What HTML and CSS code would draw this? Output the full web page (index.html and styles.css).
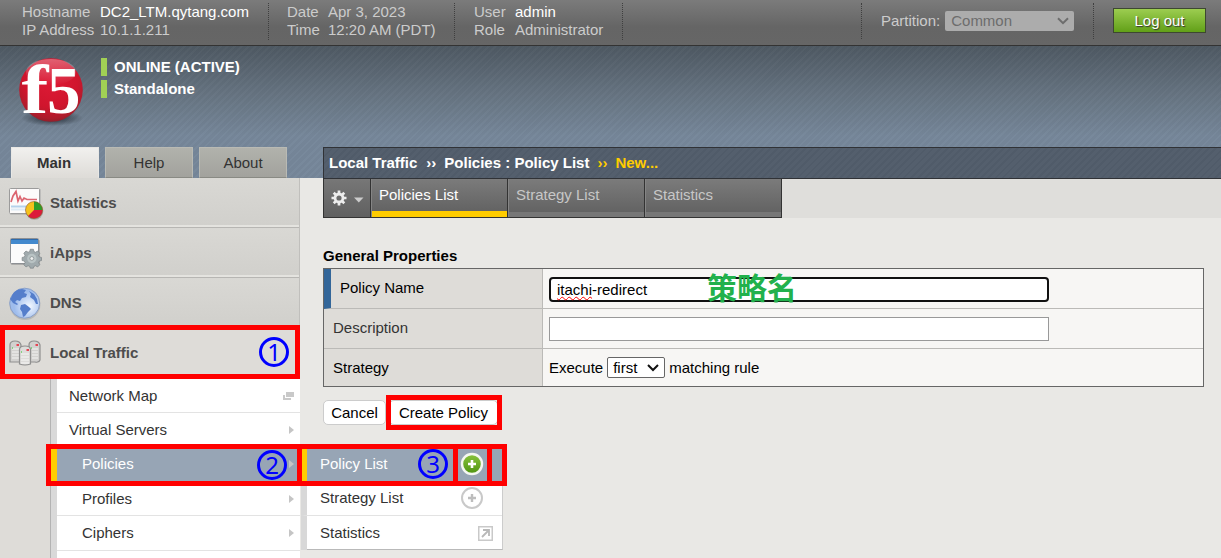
FILE: index.html
```html
<!DOCTYPE html>
<html lang="en">
<head>
<meta charset="utf-8">
<title>BIG-IP - Policies</title>
<link rel="stylesheet" href="styles.css">
</head>
<body>
<div class="app">
  <header class="topbar">
    <dl class="info info-host">
      <dt>Hostname</dt><dd class="strong">DC2_LTM.qytang.com</dd>
      <dt>IP Address</dt><dd>10.1.1.211</dd>
    </dl>
    <dl class="info info-date">
      <dt>Date</dt><dd>Apr 3, 2023</dd>
      <dt>Time</dt><dd>12:20 AM (PDT)</dd>
    </dl>
    <dl class="info info-user">
      <dt>User</dt><dd class="strong">admin</dd>
      <dt>Role</dt><dd>Administrator</dd>
    </dl>
    <div class="partition">
      <span>Partition:</span>
      <span class="partition-select">Common
        <svg width="12" height="8" viewBox="0 0 12 8"><path d="M1 1.200 6 6.200 11 1.200" fill="none" stroke="#6d6d6d" stroke-width="2"/></svg>
      </span>
    </div>
    <div class="logout-wrap"><button class="logout">Log out</button></div>
  </header>

  <div class="body">
    <aside class="side">
      <div class="brand">
        <svg class="logo" width="70" height="72" viewBox="0 0 70 72">
          <defs>
            <radialGradient id="ball" cx=".5" cy=".35" r=".7">
              <stop offset="0" stop-color="#de1a36"/><stop offset=".6" stop-color="#d0152d"/><stop offset=".85" stop-color="#ad1c2b"/><stop offset="1" stop-color="#7c2029"/>
            </radialGradient>
            <linearGradient id="shine" x1="0" y1="0" x2="0" y2="1">
              <stop offset="0" stop-color="#fff" stop-opacity=".32"/><stop offset="1" stop-color="#fff" stop-opacity="0"/>
            </linearGradient>
            <radialGradient id="shade"><stop offset="0" stop-color="#1d252d" stop-opacity=".95"/><stop offset="1" stop-color="#1d252d" stop-opacity="0"/></radialGradient>
          </defs>
          <ellipse cx="36" cy="60" rx="31" ry="8" fill="url(#shade)"/>
          <circle cx="35" cy="32" r="31.800" fill="url(#ball)"/>
          <ellipse cx="35" cy="14" rx="25" ry="13" fill="url(#shine)"/>
          <text class="logo-f" transform="translate(5.500 54.500) scale(1.170 1)">f</text>
          <text class="logo-5" transform="translate(31 54.500)">5</text>
        </svg>
        <div class="status">
          <div class="status-line">ONLINE (ACTIVE)</div>
          <div class="status-line">Standalone</div>
        </div>
      </div>
      <nav class="tabs">
        <div class="tab tab-on">Main</div><div class="tab">Help</div><div class="tab">About</div>
      </nav>
      <div class="menu">
        <div class="item">
          <svg width="38" height="34" viewBox="0 0 38 34">
            <rect x="2" y="3" width="31" height="26" rx="1" fill="#aaa" opacity=".55"/>
            <rect x="1.500" y="2.500" width="30" height="25" rx="1" fill="#fcfbfb" stroke="#9b9b9b"/>
            <path d="M3 16 5 10 8 5.500 10 15 12 10.500 14 15 16 12 19 13.500H29" fill="none" stroke="#dc6570" stroke-width="1.700"/>
            <path d="M3 20.500h26" stroke="#b5d2eb" stroke-width="2"/><path d="M3 23.500h26" stroke="#deebf5" stroke-width="2"/>
            <circle cx="26.500" cy="25" r="8.800" fill="#777" opacity=".5"/>
            <circle cx="26" cy="24" r="8.500" fill="#f5c21c"/>
            <path d="M26 24V15.500a8.500 8.500 0 0 1 8.500 8.500z" fill="#2e9d28"/>
            <path d="M26 24h8.500a8.500 8.500 0 0 1-14.500 6z" fill="#dc1a3a"/>
            <circle cx="26" cy="24" r="8.500" fill="none" stroke="#86512d" stroke-opacity=".55"/>
          </svg>
          <span>Statistics</span>
        </div>
        <div class="item">
          <svg width="38" height="34" viewBox="0 0 38 34">
            <rect x="3" y="4" width="29" height="25" rx="1" fill="#888" opacity=".5"/>
            <rect x="2.500" y="2.500" width="28" height="25" rx="1" fill="#fbfbfb" stroke="#8d9094"/>
            <path d="M3 3h27v5h-27z" fill="#4389cd"/><path d="M3 3.500h27" stroke="#2d6bad"/>
            <g transform="translate(2.700 2.700) scale(.88)" fill="#a0aaad" stroke="#7d8588" stroke-width=".8">
              <path d="m22.200 12 3.600 0 .6 2.600 1.800.8 2.400-1.400 2.500 2.500-1.400 2.300.8 1.900 2.500.6v3.500l-2.500.6-.8 1.900 1.400 2.300-2.500 2.500-2.400-1.400-1.800.8-.6 2h-3.600l-.6-2-1.800-.8-2.400 1.400-2.500-2.500 1.400-2.300-.8-1.900-2.500-.6v-3.500l2.500-.6.8-1.900-1.400-2.300 2.500-2.500 2.400 1.400 1.800-.8z"/>
              <circle cx="24" cy="22.500" r="5.300" fill="#b9c3c4" stroke="none"/>
              <circle cx="24" cy="22.500" r="2.200" fill="#eef0ef"/>
            </g>
          </svg>
          <span>iApps</span>
        </div>
        <div class="item">
          <svg width="38" height="34" viewBox="0 0 38 34">
            <defs><radialGradient id="globe" cx=".65" cy=".6"><stop offset="0" stop-color="#f3f8ff"/><stop offset="1" stop-color="#9ebcec"/></radialGradient></defs>
            <circle cx="17" cy="18.500" r="15.400" fill="#999" opacity=".45"/>
            <circle cx="16.700" cy="17.200" r="15" fill="url(#globe)" stroke="#8aa0c8"/>
            <path d="M3.500 11C5 6 9 3 14 3l4 1-2 3 3 1-1 3-4 1-2 3-3-1-2 2 3 2-1 1-4-2-3-4zM13 19l4-1 4 3 2 2-3 3-3 4-2 1-1-5-2-3zM21 5l5 3 3 5 1 5-2 0-2-4-4-3 1-3z" fill="#557ecb"/>
          </svg>
          <span>DNS</span>
        </div>
        <div class="item item-open">
          <svg width="38" height="34" viewBox="0 0 38 34">
            <path d="M2 26V9q0-4 5-4t6 4v17z" fill="#d2d1cf" stroke="#8f8f8f" stroke-width="1.200"/>
            <path d="M21 26V9q0-4 5-4t6 4v15q-1 3-5 2z" fill="#d2d1cf" stroke="#8f8f8f" stroke-width="1.200"/>
            <path d="M4 13h7M4 16h7M4 19h7M4 22h7M24 13h6M24 16h6M24 19h6M24 22h6" stroke="#f4f4f3"/>
            <path d="M11.500 28V13.500q0-3.500 5.500-3.500t5.500 3.500V28q-5.500 2-11 0z" fill="#dddcda" stroke="#8f8f8f" stroke-width="1.200"/>
            <path d="M13 18h8M13 21h8M13 24h8M13 27h8" stroke="#f7f7f6"/>
            <path d="M8.500 9h2.500M27.500 9h2.500M18.500 14h2.500" stroke="#e64452" stroke-width="2.200"/>
            <path d="M4 12h1M23 12h1M13 16h1" stroke="#68cf65" stroke-width="1.500"/>
          </svg>
          <span>Local Traffic</span>
        </div>
        <div class="submenu">
          <div class="row row-top">Network Map<svg width="11" height="8"><path d="M3 0h8v5H3zM0 3h2v3h6v2H0z" fill="#c9c9c9"/></svg></div>
          <div class="row row-short row-top">Virtual Servers<i class="arrow"></i></div>
          <div class="row row-on">Policies<i class="arrow"></i></div>
          <div class="row row-short">Profiles<i class="arrow"></i></div>
          <div class="row row-last">Ciphers<i class="arrow"></i></div>
          <div class="row"></div>
        </div>
      </div>
    </aside>

    <main class="content">
      <div class="crumb"><span>Local Traffic</span><span class="sep">››</span><span>Policies : Policy List</span><span class="sep gold">››</span><span class="gold">New...</span></div>
      <div class="strip">
        <div class="gear">
          <svg width="34" height="20" viewBox="0 0 34 20">
            <g stroke="#ededed" fill="none"><circle cx="8" cy="9" r="4" stroke-width="2.800"/><path d="M8 1.500v3M8 13.500v3M.5 9h3M12.500 9h3M2.700 3.700l2.200 2.200M11.100 12.100l2.200 2.200M13.300 3.700l-2.200 2.200M4.900 12.100l-2.200 2.200" stroke-width="2.700"/></g>
            <path d="M23 8.500h9.500L27.800 13.500z" fill="#ccc"/>
          </svg>
        </div>
        <div class="stab stab-on">Policies List</div>
        <div class="stab">Strategy List</div>
        <div class="stab">Statistics</div>
      </div>
      <div class="panel">
        <h2 class="title">General Properties</h2>
        <div class="props">
          <div class="label required">Policy Name</div>
          <div class="value"><div class="field field-focus"><span class="misspelt">itachi</span>-redirect</div></div>
          <div class="label dim">Description</div>
          <div class="value"><div class="field"></div></div>
          <div class="label last">Strategy</div>
          <div class="value last">Execute
            <span class="choice">first<svg width="12" height="8" viewBox="0 0 12 8"><path d="M1 1 6 6 11 1" fill="none" stroke="#111" stroke-width="2"/></svg></span>
            matching rule</div>
        </div>
        <div class="actions"><button class="btn btn-cancel">Cancel</button><button class="btn btn-create">Create Policy</button></div>
      </div>
    </main>
  </div>

  <div class="flyout">
    <div class="fly fly-on">Policy List
      <svg width="24" height="24" viewBox="0 0 24 24"><defs><linearGradient id="plus" x1="0" y1="0" x2="0" y2="1"><stop offset="0" stop-color="#8ac43e"/><stop offset="1" stop-color="#4e9310"/></linearGradient></defs><circle cx="12" cy="12" r="10" fill="url(#plus)" stroke="#f5f7f1" stroke-width="2.400"/><path d="M12 8v8M8 12h8" stroke="#fff" stroke-width="2.600"/></svg>
    </div>
    <div class="fly">Strategy List
      <svg width="24" height="24" viewBox="0 0 24 24"><circle cx="12" cy="12" r="10" fill="#fff" stroke="#c9c9c9" stroke-width="2"/><path d="M12 8v8M8 12h8" stroke="#bdbdbd" stroke-width="2.400"/></svg>
    </div>
    <div class="fly fly-last">Statistics
      <svg class="ext" width="15" height="15" viewBox="0 0 15 15"><rect x=".75" y=".75" width="13.500" height="13.500" fill="#fff" stroke="#c9c9c9" stroke-width="1.500"/><path d="M5 4h6v6M11 4 4 11" fill="none" stroke="#b9b9b9" stroke-width="1.800"/></svg>
    </div>
  </div>

  <div class="mark mark-traffic"></div>
  <div class="mark mark-policies"></div>
  <div class="mark mark-list"></div>
  <div class="mark mark-add"></div>
  <div class="mark mark-create"></div>
  <div class="step step-1">1</div>
  <div class="step step-2">2</div>
  <div class="step step-3">3</div>
  <div class="note">策略名</div>
</div>
</body>
</html>
```
FILE: styles.css
```css
* { box-sizing: border-box; }
body { margin: 0; font: 15px/18px "Liberation Sans", Arial, sans-serif; color: #000; }
.app { position: relative; width: 1221px; height: 558px; overflow: hidden; background: #e9e8e5; }
svg { display: block; flex: none; }
button { font: inherit; margin: 0; padding: 0; }

.topbar { display: flex; height: 46px; padding-top: 3px; border-bottom: 1px solid #333; background: linear-gradient(#7b7b7b, #656565 60%, #666); color: #ccc; }
.info { display: grid; grid-template-rows: 18px 18px; height: 37px; margin: 0; border-right: 1px dotted #3f3f3f; white-space: nowrap; }
.info dd { margin: 0; }
.info .strong { color: #fff; }
.info-host { width: 269px; padding-left: 22px; grid-template-columns: 78px 1fr; }
.info-date { width: 186px; padding-left: 18px; grid-template-columns: 41px 1fr; }
.info-user { width: 168px; padding-left: 19px; grid-template-columns: 41px 1fr; }
.partition { display: flex; gap: 5px; width: 233px; height: 36px; margin-left: 238px; padding: 8px 0 0 19px; border-left: 1px dotted #3f3f3f; border-right: 1px dotted #3f3f3f; }
.partition span:first-child { padding-top: 1px; }
.partition-select { display: flex; align-items: center; justify-content: space-between; width: 129px; height: 20px; padding: 0 5px 0 6px; border-radius: 2px; background: #acacac; color: #6d6d6d; }
.logout-wrap { padding: 5px 0 0 19px; }
.logout { display: block; width: 93px; height: 25px; border: 1px solid #3d4830; background: linear-gradient(#9ccd50, #62a018); color: #fff; text-shadow: 1px 1px 1px #333; }

.body { display: flex; height: 512px; background: repeating-linear-gradient(135deg, rgba(255,255,255,.015) 0 2px, rgba(0,0,0,.02) 2px 5px), linear-gradient(#4e5963, #65727f 45px, #76879a 90px, #76879a 132px) top / 100% 132px no-repeat; }
.side { width: 300px; }
.brand { display: flex; height: 101px; padding-top: 12px; }
.logo { margin-left: 16px; overflow: visible; }
.logo-f { font: bold 69px "Liberation Serif", serif; fill: #fff; }
.logo-5 { font: bold 67px "Liberation Serif", serif; fill: #fff; }
.status { margin-left: 15px; color: #fff; font-weight: bold; }
.status-line { height: 18px; margin-bottom: 4px; padding-left: 7px; border-left: 6px solid #a1d055; }
.tabs { display: flex; gap: 6px; height: 31px; padding-left: 11px; }
.tab { width: 88px; padding-top: 6px; border: 1px solid #b9bab4; border-bottom-color: #898a84; background: linear-gradient(#b1b2ac, #a2a29d); color: #333; text-align: center; }
.tab-on { background: linear-gradient(#f1f0ee, #dedcd8); border-color: #e9e8e5; border-bottom-color: #dedcd8; font-weight: bold; padding-right: 2px; }
.menu { height: 380px; background: #dedcd8; border-right: 1px solid #c0bfbc; }
.item { display: flex; align-items: center; height: 50px; padding-left: 8px; background: linear-gradient(#d9d8d4, #d1d0cc 47px, #e4e3df 47px, #e4e3df 49px, #b7b6b3 49px); color: #4d4d4d; font-weight: bold; }
.item span { padding: 0 0 1px 4px; }
.item-open { background: #dedcd8; }
.submenu { width: 250px; margin-left: 50px; border-left: 1px solid #b3b3b3; background: #d9d9d9; padding-left: 6px; }
.row { display: flex; justify-content: space-between; align-items: center; height: 35px; padding: 1px 6px 0 25px; border-bottom: 1px solid #e3e3e3; background: #fff; color: #333; }
.row-short { height: 34px; }
.row-top { padding-left: 12px; }
.row-top:first-child { padding-top: 2px; }
.row-on { margin-left: -6px; padding-top: 0; padding-bottom: 2px; border-left: 6px solid #fc0; border-bottom: 0; background: #97a5b5; color: #fff; }
.row-last { padding-top: 0; padding-bottom: 1px; }
.arrow { border: 4.500px solid transparent; border-left: 5px solid #c5c5c5; border-right: 0; }

.content { flex: 1; background: linear-gradient(#e9e8e5, #e9e8e5) 0 132px no-repeat; padding: 101px 0 0 23px; }
.crumb { display: flex; height: 32px; padding: 6px 0 0 5px; border: 1px solid #303236; border-right: 0; background: repeating-linear-gradient(135deg, #505b69 0 2px, #545f6d 2px 5px); color: #fff; font-weight: bold; }
.crumb .sep { margin: 0 8px 0 9px; }
.crumb .sep.gold { margin-left: 8px; }
.crumb .gold { color: #fc0; }
.strip { display: flex; height: 39px; background: #dfdedb; }
.gear { width: 48px; padding: 10px 0 0 7px; border: 1px solid #333; border-top: 0; background: linear-gradient(#777, #606060); }
.stab { width: 137px; padding: 7px 0 0 8px; border: 1px solid #333; border-width: 0 1px 1px 0; background: linear-gradient(#7b7b7b, #636363 33px, #777 33px); box-shadow: inset 1px 0 #858585; color: #c7c7c7; }
.stab-on { background: linear-gradient(#7b7b7b, #636363 32px, #fc0 32px); color: #fff; }
.panel { padding: 29px 17px 0 0; }
.title { margin: 0 0 3px; font: bold 15px/18px "Liberation Sans", Arial, sans-serif; }
.props { display: grid; grid-template-columns: 219px 1fr; grid-template-rows: 40px 40px 37px; border: 1px solid #666; }
.label { padding: 10px 0 0 9px; border-right: 1px solid #bbbab7; border-bottom: 1px solid #bbbab7; background: #dedcd8; }
.required { padding-left: 9px; border-left: 7px solid #369; }
.dim { color: #333; }
.value { padding: 8px 0 0 6px; border-bottom: 1px solid #bbbab7; background: #f7f6f4; }
.field { width: 500px; height: 24px; padding: 2px 8px; border: 1px solid #999; background: #fff; line-height: 18px; }
.field-focus { height: 25px; padding: 1px 6px; border: 2px solid #111; border-radius: 4px; line-height: 19px; }
.misspelt { text-decoration: underline wavy red 1px; text-underline-offset: 1px; text-decoration-skip-ink: none; }
.last { border-bottom: 0; }
.value.last { display: flex; align-items: center; gap: 4px; padding-top: 0; }
.choice { display: flex; align-items: center; justify-content: space-between; width: 58px; height: 21px; padding: 0 5px; border: 1px solid #666; border-radius: 2px; background: #fff; }
.actions { display: flex; gap: 3px; padding-top: 13px; }
.btn { height: 25px; border: 1px solid #ccc; border-radius: 5px; background: #fff; color: #000; }
.btn-cancel { width: 63px; }
.btn-create { width: 109px; }

.flyout { position: absolute; left: 301px; top: 447px; width: 202px; height: 103px; border-bottom: 1px solid #b9b9b9; border-right: 1px solid #ccc; background: #fff; }
.fly { display: flex; justify-content: space-between; align-items: center; height: 34px; padding: 0 18px 2px 13px; border-left: 6px solid #d8d8d8; border-bottom: 1px solid #e3e3e3; color: #333; }
.fly-on { height: 35px; border-left-color: #fc0; border-bottom: 0; background: #97a5b5; color: #fff; }
.fly-last { padding-bottom: 0; border-bottom: 0; }
.ext { margin-right: -9px; }

.mark { position: absolute; border: 5px solid #f00; }
.mark-traffic { left: 0; top: 325px; width: 300px; height: 54px; }
.mark-policies { left: 46px; top: 444px; width: 256px; height: 42px; }
.mark-list { left: 297px; top: 444px; width: 210px; height: 42px; }
.mark-add { left: 453px; top: 444px; width: 39px; height: 42px; }
.mark-create { left: 386px; top: 395px; width: 116px; height: 35px; }
.step { position: absolute; width: 30px; height: 30px; border: 3px solid #00f; border-radius: 50%; color: #00f; font: 24px/23px "Noto Sans", sans-serif; text-align: center; }
.step-1 { left: 259px; top: 337px; }
.step-2 { left: 257px; top: 450px; }
.step-3 { left: 418px; top: 449px; }
.note { position: absolute; left: 707px; top: 268px; color: #22b14c; font: bold 30px/36px "Noto Sans CJK SC", sans-serif; }
```
